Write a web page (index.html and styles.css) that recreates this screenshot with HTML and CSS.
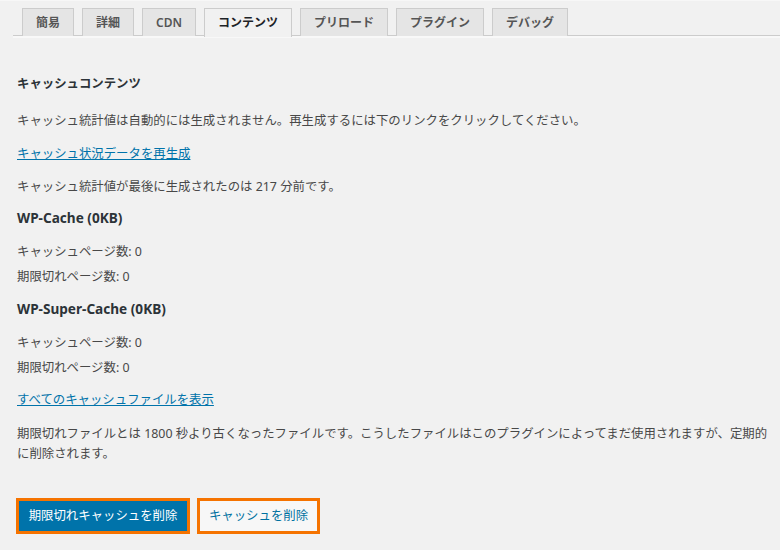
FILE: index.html
```html
<!DOCTYPE html>
<html lang="ja">
<head>
<meta charset="utf-8">
<title>キャッシュコンテンツ</title>
<link rel="stylesheet" href="styles.css">
</head>
<body>
<div class="wrap">
  <nav class="tabs">
    <a class="tab">簡易</a>
    <a class="tab">詳細</a>
    <a class="tab">CDN</a>
    <a class="tab active">コンテンツ</a>
    <a class="tab">プリロード</a>
    <a class="tab">プラグイン</a>
    <a class="tab">デバッグ</a>
  </nav>
  <main class="content">
    <h3 class="title">キャッシュコンテンツ</h3>
    <p class="row">キャッシュ統計値は自動的には生成されません。再生成するには下のリンクをクリックしてください。</p>
    <p class="row"><a class="link">キャッシュ状況データを再生成</a></p>
    <p class="row">キャッシュ統計値が最後に生成されたのは 217 分前です。</p>
    <h4 class="sub">WP-Cache (0KB)</h4>
    <p class="row first">キャッシュページ数: 0</p>
    <p class="row tight">期限切れページ数: 0</p>
    <h4 class="sub">WP-Super-Cache (0KB)</h4>
    <p class="row first">キャッシュページ数: 0</p>
    <p class="row tight">期限切れページ数: 0</p>
    <p class="row"><a class="link">すべてのキャッシュファイルを表示</a></p>
    <p class="row note">期限切れファイルとは 1800 秒より古くなったファイルです。こうしたファイルはこのプラグインによってまだ使用されますが、定期的に削除されます。</p>
    <div class="actions">
      <button class="btn primary">期限切れキャッシュを削除</button>
      <button class="btn secondary">キャッシュを削除</button>
    </div>
  </main>
</div>
</body>
</html>
```

FILE: styles.css
```css
* { box-sizing: border-box; }
html, body {
  margin: 0;
  padding: 0;
  background: #f1f1f1;
}
body {
  font-family: "Noto Sans", "Noto Sans CJK JP", sans-serif;
  color: #484848;
  font-size: 12.4px;
  width: 780px;
  height: 550px;
  overflow: hidden;
}
.wrap {
  border-top: 1px solid #f7f7f7;
}
.tabs {
  display: flex;
  gap: 8px;
  margin: 7px 0 0 13px;
  padding-left: 9px;
  border-bottom: 1px solid #cccccc;
  box-shadow: 0 2px 0 #f8f8f8;
  height: 28px;
}
.tab {
  display: flex;
  align-items: center;
  height: 28px;
  padding: 0 13px;
  border: 1px solid #cccccc;
  border-bottom: none;
  background: #e5e5e5;
  color: #555;
  font-size: 12px;
  font-weight: 600;
  line-height: 1;
}
.tab.active {
  background: #f1f1f1;
  color: #1d2327;
  height: 29px;
}
.content {
  padding: 0 17px;
  display: flex;
  flex-direction: column;
  align-items: flex-start;
}
.title {
  margin: 38px 0 0;
  font-size: 12.4px;
  font-weight: 700;
  line-height: 20px;
  color: #2c3338;
}
.row {
  margin: 17px 0 0;
  line-height: 20px;
}
.title + .row { margin-top: 17px; }
.row + .row { margin-top: 13px; }
.row.first { margin-top: 14px; }
.row.tight { margin-top: 5px; }
.sub {
  margin: 11px 0 0;
  font-size: 13.6px;
  font-weight: 700;
  line-height: 20px;
  color: #2c3338;
}
.row.tight + .sub { margin-top: 12px; }
.row.tight + .row { margin-top: 12px; }
.row.note { margin-top: 14px; width: 762px; }
.link {
  color: #0073aa;
  text-decoration: underline;
}
.actions {
  display: flex;
  gap: 7px;
  margin: 34px 0 0 -1px;
}
.btn {
  font-family: inherit;
  font-size: 12.4px;
  height: 36px;
  padding: 0 6px;
  border: 3px solid #f57300;
  line-height: 1;
  white-space: nowrap;
  cursor: pointer;
}
.btn.primary {
  background: #0073aa;
  color: #ffffff;
  width: 174px;
}
.btn.secondary {
  background: #f7f7f7;
  color: #0071a1;
  width: 123px;
}
```
